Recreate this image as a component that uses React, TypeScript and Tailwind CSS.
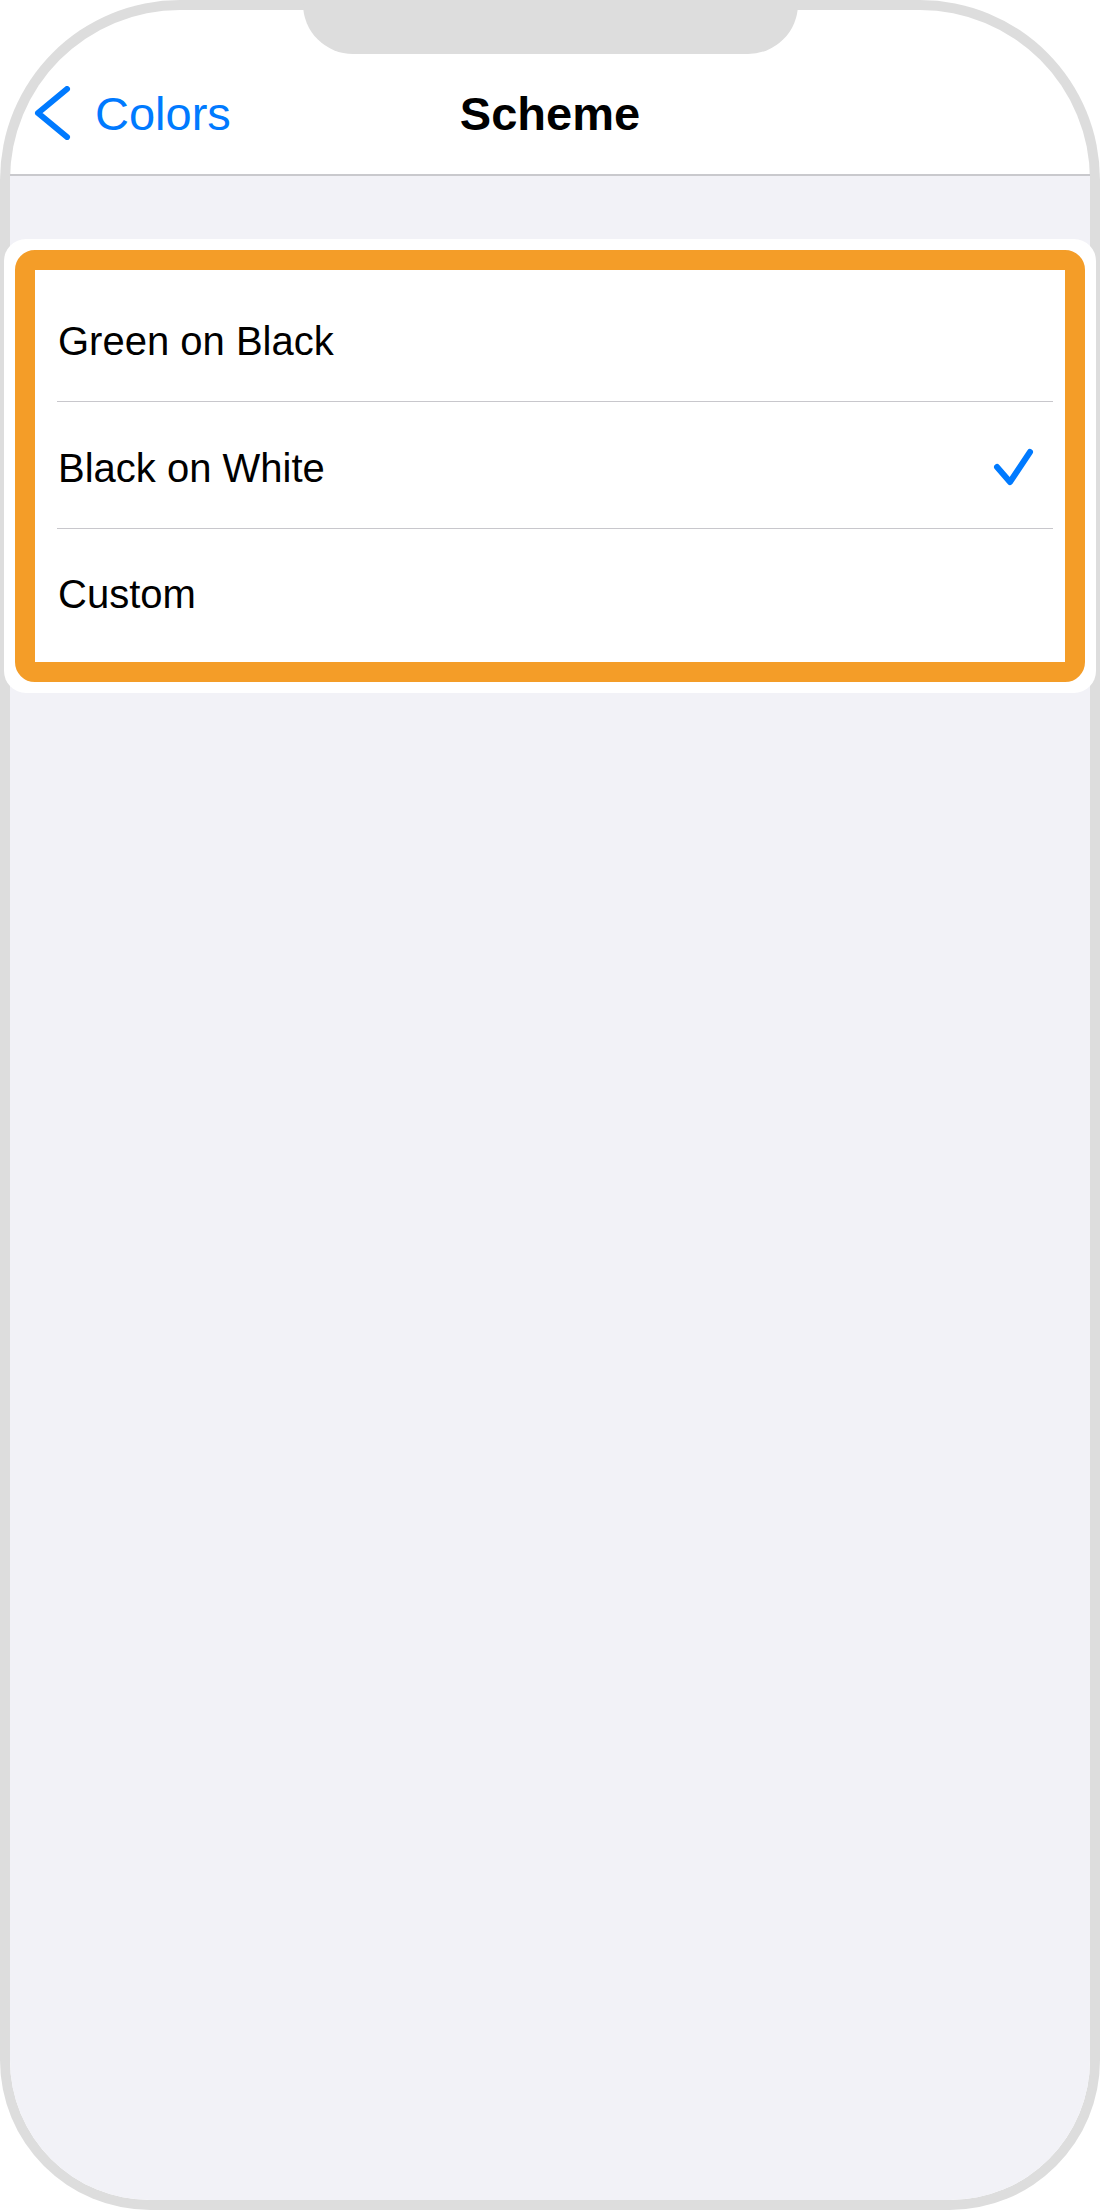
import React from 'react';

const options = [
  { label: 'Green on Black', selected: false, row: 'h-[131px] pt-[51px]' },
  { label: 'Black on White', selected: true, row: 'h-[126px] pt-[46px]' },
  { label: 'Custom', selected: false, row: 'h-[133px] pt-[45px]' },
];

const BackChevron = () => (
  <svg width="37" height="54" viewBox="0 0 37 54" fill="none">
    <path d="M33 3 L4 27 L33 51" stroke="#007aff" strokeWidth="6" strokeLinecap="round" strokeLinejoin="round" />
  </svg>
);

const Check = () => (
  <svg width="41" height="38" viewBox="0 0 41 38" fill="none">
    <path d="M4 19 L17 34 L37 4" stroke="#007aff" strokeWidth="6" strokeLinecap="round" strokeLinejoin="round" />
  </svg>
);

const App = () => {
  return (
    <div className="relative w-[1100px] h-[2210px] bg-[#dddddd] rounded-t-[180px] rounded-b-[150px] p-[10px] font-['Liberation_Sans',Arial,sans-serif]">
      {/* notch */}
      <div className="absolute top-0 left-[303px] w-[495px] h-[54px] bg-[#dddddd] rounded-b-[50px] z-10" />

      <div className="h-full flex flex-col bg-white rounded-t-[170px] rounded-b-[140px]">
        <div className="h-[166px] border-b-2 border-[#c9c9cd] shrink-0">
          <div className="mt-[76px] h-[47px] grid grid-cols-[1fr_auto_1fr] items-center">
            <div className="flex items-center pl-[24px] gap-[24px]">
              <BackChevron />
              <span className="text-[47px] leading-[47px] text-[#007aff]">Colors</span>
            </div>
            <span className="text-[47px] leading-[47px] font-bold text-black">Scheme</span>
            <div />
          </div>
        </div>

        <div className="flex-1 bg-[#f2f2f7] rounded-b-[140px] pt-[63px]">
          <div className="-mx-[6px] p-[11px] bg-white rounded-[22px]">
            <div className="border-[20px] border-[#f49d28] rounded-[20px]">
              <div className="bg-white rounded-[3px]">
                {options.map((o, i) => (
                  <div key={o.label}>
                    {i > 0 && <div className="h-px bg-[#c8c7cc] ml-[22px] mr-[12px]" />}
                    <div className={`${o.row} flex items-start pl-[23px] pr-[31px]`}>
                      <span className="text-[40px] leading-[40px] text-black">{o.label}</span>
                      {o.selected && (
                        <div className="ml-auto">
                          <Check />
                        </div>
                      )}
                    </div>
                  </div>
                ))}
              </div>
            </div>
          </div>
        </div>
      </div>
    </div>
  );
};

export default App;
